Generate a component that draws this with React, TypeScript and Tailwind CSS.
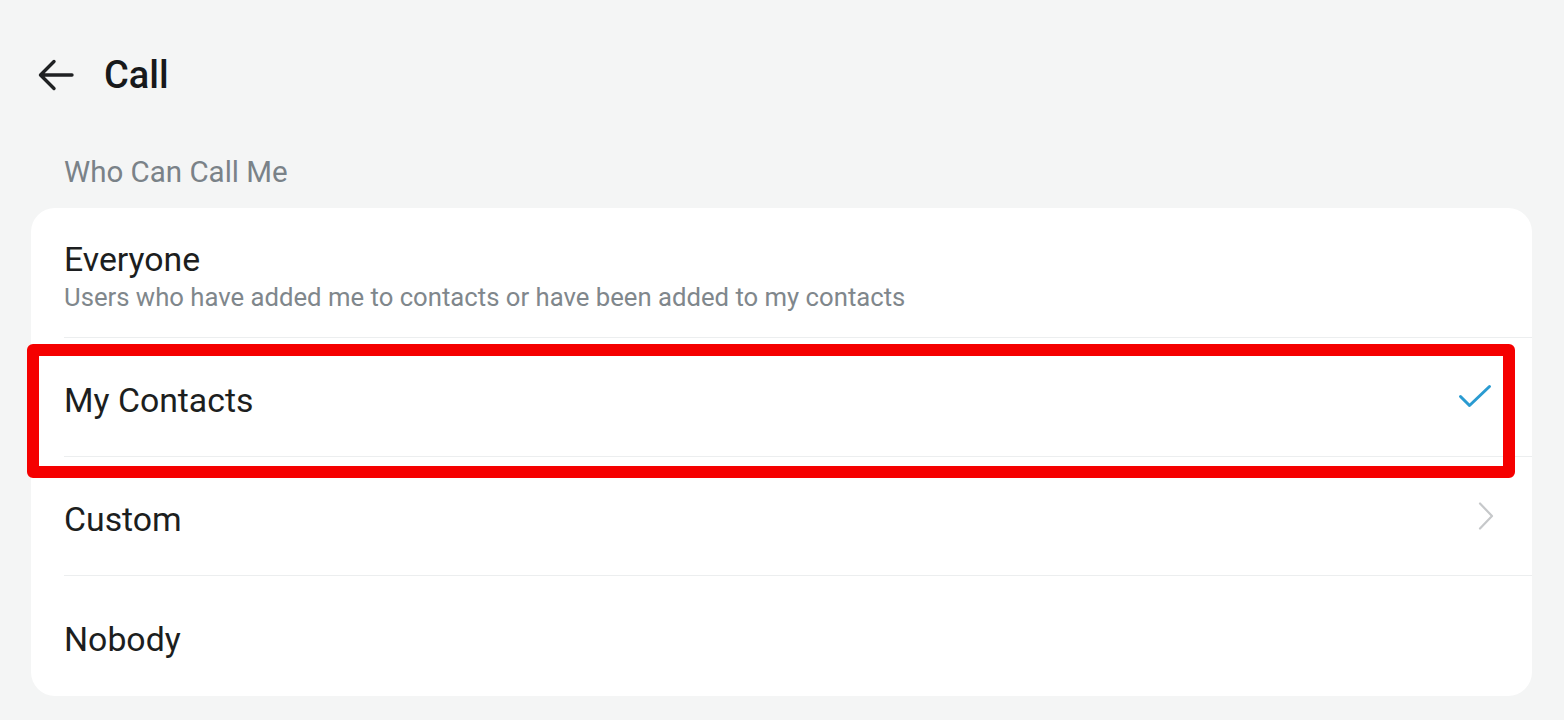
type Option = {
  label: string;
  hint?: string;
  mark?: "check" | "chevron";
  height: string;
};

const options: Option[] = [
  {
    label: "Everyone",
    hint: "Users who have added me to contacts or have been added to my contacts",
    height: "h-[130px]",
  },
  { label: "My Contacts", mark: "check", height: "h-[119px]" },
  { label: "Custom", mark: "chevron", height: "h-[119px]" },
  { label: "Nobody", height: "h-[120px]" },
];

function BackArrow() {
  return (
    <svg width="40" height="40" viewBox="0 0 40 40" fill="none">
      <path
        d="M36 20H5M18 6.5L4.5 20L18 33.5"
        stroke="#1f2123"
        strokeWidth="3.4"
        strokeLinecap="round"
        strokeLinejoin="round"
      />
    </svg>
  );
}

function CheckMark() {
  return (
    <svg width="34" height="26" viewBox="0 0 34 26" fill="none">
      <path
        d="M2.5 12.5L11.5 21.5L31.5 2.5"
        stroke="#2a9bd1"
        strokeWidth="3"
        strokeLinecap="round"
        strokeLinejoin="round"
      />
    </svg>
  );
}

function Chevron() {
  return (
    <svg width="18" height="30" viewBox="0 0 18 30" fill="none">
      <path
        d="M3 2.5L15 15L3 27.5"
        stroke="#c6c8ca"
        strokeWidth="2.2"
        strokeLinecap="round"
        strokeLinejoin="round"
      />
    </svg>
  );
}

export default function App() {
  return (
    <div
      className="min-h-[720px] w-full bg-[#f4f5f5] pt-[54px]"
      style={{ fontFamily: "Roboto, 'Noto Sans', sans-serif" }}
    >
      {/* Header */}
      <div className="flex h-[42px] items-center pl-[36px]">
        <BackArrow />
        <h1 className="ml-[28px] text-[38px] font-medium leading-none text-[#17191b]">
          Call
        </h1>
      </div>

      {/* Section label */}
      <div className="mt-[59px] pl-[64px] text-[29.5px] leading-[34px] text-[#7a8288]">
        Who Can Call Me
      </div>

      {/* Options card */}
      <div className="relative ml-[31px] mr-[32px] mt-[19px] rounded-[24px] bg-white">
        {options.map((opt, i) => (
          <div key={opt.label} className={`${opt.height} pl-[33px]`}>
            <div
              className={`flex h-full items-center ${
                opt.mark === "chevron" ? "pr-[37px]" : "pr-[40px]"
              } ${i < options.length - 1 ? "border-b border-[#eceeef]" : ""}`}
            >
              <div className="flex-1 pt-[7px]">
                <div className="text-[33.8px] leading-[40px] text-[#1c1e20]">
                  {opt.label}
                </div>
                {opt.hint && (
                  <div className="mt-[2px] text-[25.7px] leading-[30px] text-[#80878c]">
                    {opt.hint}
                  </div>
                )}
              </div>
              {opt.mark === "check" && <CheckMark />}
              {opt.mark === "chevron" && <Chevron />}
            </div>
          </div>
        ))}

        {/* Red highlight annotation */}
        <div className="pointer-events-none absolute left-[-4px] top-[136px] h-[134px] w-[1488px] rounded-[6px] border-[12px] border-[#f50000]" />
      </div>
    </div>
  );
}
